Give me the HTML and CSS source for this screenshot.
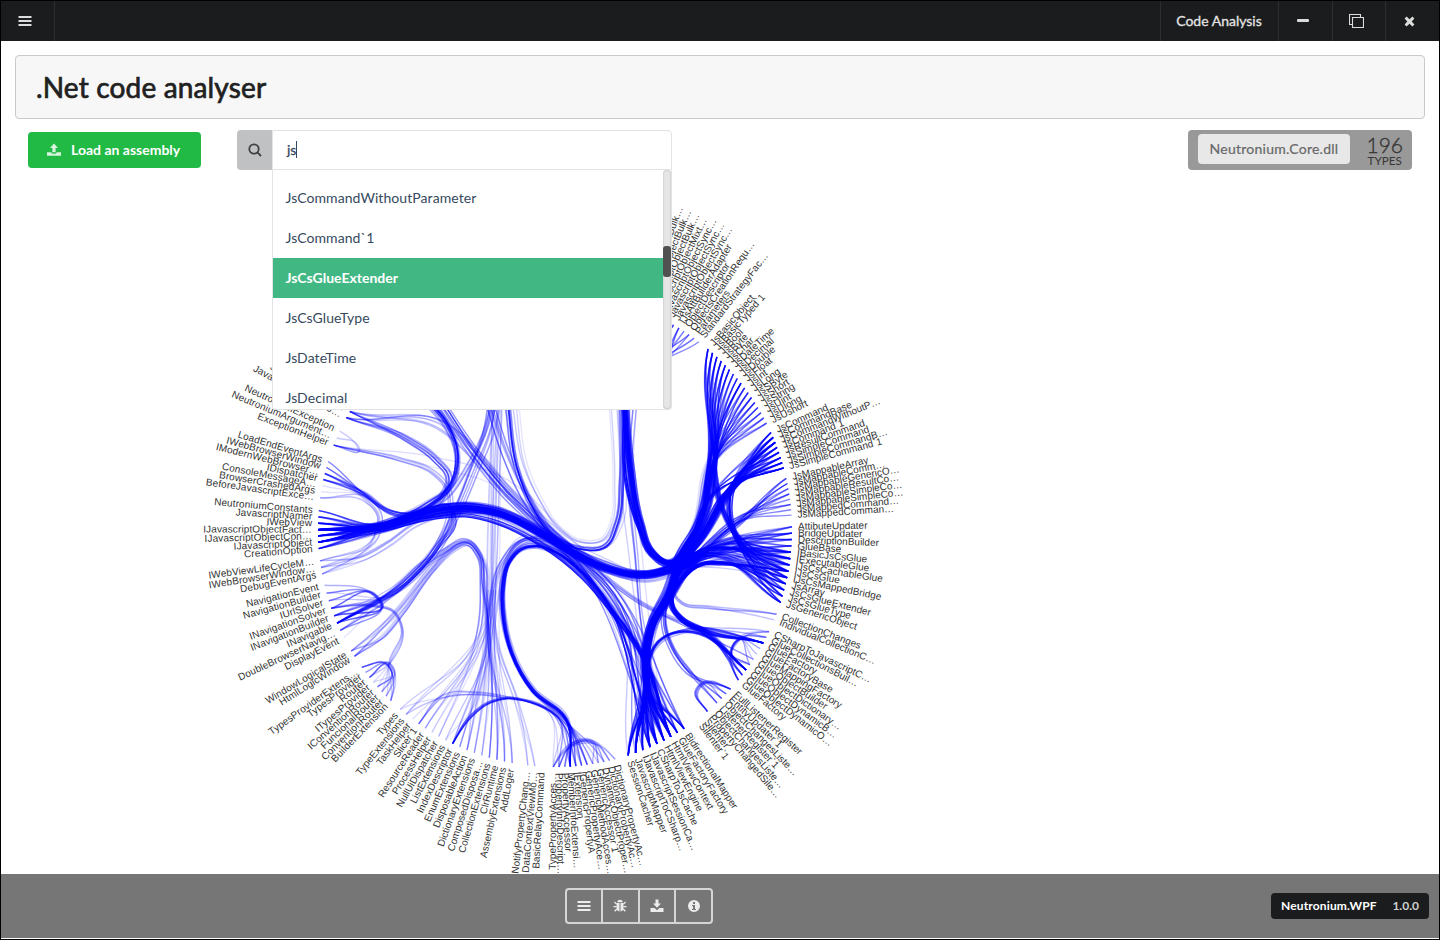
FILE: index.html
```html
<!DOCTYPE html>
<html lang="en">
<head>
<meta charset="utf-8">
<title>Code Analysis</title>
<link rel="stylesheet" href="styles.css">
</head>
<body>
<div class="window">
  <header class="topbar">
    <div class="cell menu"><svg width="14" height="12" viewBox="0 0 14 12"><path d="M.5 1h13v2H.5zM.5 5h13v2H.5zM.5 9h13v2H.5z"/></svg></div>
    <div class="spacer"></div>
    <div class="cell name">Code Analysis</div>
    <div class="cell min"><svg width="12" height="3" viewBox="0 0 12 3"><rect width="12" height="3" rx="1"/></svg></div>
    <div class="cell max"><svg width="15" height="14" viewBox="0 0 15 14"><path class="line" d="M3.500 10.500h-3v-10h11v3M3.500 3.500h11v10h-11z"/></svg></div>
    <div class="cell close"><svg width="11" height="11" viewBox="0 0 11 11"><path d="M2.600.6 5.500 3.300 8.400.6 10.400 2.600 7.700 5.500l2.700 2.900-2 2-2.900-2.700-2.900 2.700-2-2 2.700-2.900L.6 2.600z"/></svg></div>
  </header>
  <main class="content">
    <h1 class="title">.Net code analyser</h1>
    <div class="toolbar">
      <button class="load"><svg width="14" height="14" viewBox="0 0 14 14"><path d="M7 .5 11 5H8.600v4.200H5.400V5H3zM0 9.200h4.300c.3 1 1.200 1.500 2.700 1.500s2.400-.5 2.700-1.500H14v3.500H0z"/></svg><span>Load an assembly</span></button>
      <div class="search">
        <div class="glass"><svg width="14" height="14" viewBox="0 0 14 14"><circle cx="6" cy="6" r="4.700"/><path d="M9.400 9.400 13 13"/></svg></div>
        <div class="field"><span>js</span><i class="caret"></i></div>
        <ul class="options">
          <li>JsCommandWithoutParameter</li>
          <li>JsCommand`1</li>
          <li class="active">JsCsGlueExtender</li>
          <li>JsCsGlueType</li>
          <li>JsDateTime</li>
          <li>JsDecimal</li>
        </ul>
        <div class="track"><div class="thumb"></div></div>
      </div>
      <div class="stats">
        <div class="dll">Neutronium.Core.dll</div>
        <div class="count"><b>196</b><span>TYPES</span></div>
      </div>
    </div>
    <svg class="chart" viewBox="1 171 1438 703"><g id="links"></g><g id="labels"></g></svg>
  </main>
  <footer class="footer">
    <div class="actions">
      <a><svg width="14" height="14" viewBox="0 0 14 14"><path d="M.5 2h13v2H.5zM.5 6h13v2H.5zM.5 10h13v2H.5z"/></svg></a>
      <a><svg width="14" height="14" viewBox="0 0 14 14"><path d="M4.300 3.200a2.700 2.500 0 0 1 5.400 0zM3.500 4h3v8.500C4.500 12.200 3.500 11 3.500 8.500zM7.500 4h3v4.500c0 2.500-1 3.700-3 4z"/><path class="line" d="M3.500 5 1.500 3M.5 7.700h3M3.800 10 1.700 12.300M10.500 5l2-2M10.500 7.700h3M10.200 10l2.100 2.300"/></svg></a>
      <a><svg width="14" height="14" viewBox="0 0 14 14"><path d="M5.500.5h3v4H11L7 8.700 3 4.500h2.500zM.5 9h4L7 11.300 9.500 9h4v4H.5z"/></svg></a>
      <a><svg width="14" height="14" viewBox="0 0 14 14"><path fill-rule="evenodd" d="M7 1a6 6 0 1 0 0 12A6 6 0 0 0 7 1zM6 3h2v2H6zM5 6h3v4h1v1H5v-1h1V7H5z"/></svg></a>
    </div>
    <div class="version"><b>Neutronium.WPF</b><span>1.0.0</span></div>
  </footer>
</div>
<script src="chart.js"></script>
</body>
</html>
```
FILE: styles.css
```css
* { box-sizing: border-box; }
body { margin: 0; font-family: Lato, sans-serif; font-size: 14px; color: rgba(0,0,0,.87); background: #fff; }
.window { width: 1440px; height: 940px; border: 1px solid #000; display: flex; flex-direction: column; overflow: hidden; }
.topbar { height: 40px; flex: none; display: flex; background: #1b1c1d; color: #e4e4e4; }
.cell { display: flex; align-items: center; justify-content: center; border-left: 1px solid #2d2e2f; padding-bottom: 1px; }
.cell svg { fill: #dcdcdc; }
.cell .line { fill: none; stroke: #dcdcdc; stroke-width: 1.1; }
.menu { width: 54px; border-left: 0; border-right: 1px solid #2d2e2f; padding-right: 5px; }
.spacer { flex: 1; }
.name { width: 118px; padding: 0 1px 1px 0; -webkit-text-stroke: .3px currentColor; }
.min { width: 54px; padding-right: 5px; padding-bottom: 2px; }
.max { width: 53px; padding: 0 5px 0 0; }
.close { width: 54px; padding-right: 6px; padding-bottom: 0; }
.content { flex: 1; min-height: 0; display: flex; flex-direction: column; overflow: hidden; }
.title { margin: 14px 14px 11px; height: 64px; flex: none; padding: 0 20px 1px; display: flex; align-items: center; font-size: 28px; font-weight: 400; letter-spacing: .16px; -webkit-text-stroke: .7px currentColor; background: #f7f7f7; border: 1px solid #c9c9ca; border-radius: 4px; color: #212121; white-space: nowrap; }
.toolbar { height: 40px; flex: none; display: flex; align-items: center; padding: 0 27px; }
.load { width: 173px; height: 36px; padding: 0 0 1px 19px; border: 0; border-radius: 4px; background: #21ba45; color: #fff; font: 700 14px Lato, sans-serif; display: flex; align-items: center; gap: 10px; }
.load svg { fill: rgba(255,255,255,.82); }
.search { position: relative; width: 435px; height: 40px; margin-left: 36px; display: flex; }
.glass { width: 35px; background: #c0c1c2; border-radius: 4px 0 0 4px; display: flex; align-items: center; justify-content: center; padding-left: 1px; }
.glass svg { fill: none; stroke: #3f4042; stroke-width: 1.8; }
.field { flex: 1; display: flex; align-items: center; padding: 0 0 1px 14px; border: 1px solid #e2e3e3; border-radius: 0 4px 0 0; color: #35495e; -webkit-text-stroke: .3px currentColor; }
.caret { width: 1px; height: 17px; background: #35495e; }
.options { position: absolute; z-index: 2; left: 35px; top: 40px; width: 400px; height: 240px; margin: 0; padding: 8px 8px 0 0; list-style: none; overflow: hidden; background: #fff; border: solid #e2e3e3; border-width: 0 1px 1px; border-radius: 0 0 4px 4px; color: #35495e; letter-spacing: .07px; }
.options li { height: 40px; line-height: 40px; padding-left: 12.5px; }
.options .active { background: #41b883; color: #fff; font-weight: 700; letter-spacing: 0; }
.track { position: absolute; z-index: 3; left: 426px; top: 40px; width: 8px; height: 239px; border-radius: 4px; background: #e6e6e6; box-shadow: inset 0 0 2px #aaa; }
.thumb { width: 8px; height: 31px; margin-top: 76px; border-radius: 3px; background: #515151; }
.stats { width: 224px; height: 40px; margin-left: auto; border-radius: 4px; background: #999; display: flex; align-items: center; padding: 0 9px 2px 10px; justify-content: space-between; }
.dll { width: 152px; height: 30px; padding-bottom: 1px; border-radius: 4px; background: #e8e8e8; color: #676767; display: flex; align-items: center; justify-content: center; letter-spacing: .25px; -webkit-text-stroke: .2px currentColor; }
.count { color: #373737; text-align: center; display: flex; flex-direction: column; margin-top: 2px; }
.count b { font-size: 21px; font-weight: 300; line-height: 19px; -webkit-text-stroke: .4px currentColor; }
.count span { font-size: 11.7px; line-height: 12px; }
.chart { display: block; flex: none; width: 1438px; height: 703px; margin-top: 1px; }
#links { fill: none; stroke: #00f; }
#labels { font-family: Arial, "Liberation Sans", sans-serif; font-size: 10px; fill: #333; }
#labels .side { letter-spacing: .12px; }
.footer { height: 65px; flex: none; background: #767676; border-bottom: 1px solid #fff; display: flex; align-items: center; justify-content: flex-end; padding-right: 10px; }
.actions { display: flex; width: 148px; height: 36px; margin-right: 558px; border: 2px solid #d5d5d5; border-radius: 4px; }
.actions a { width: 37px; display: flex; align-items: center; justify-content: center; border-left: 2px solid #d5d5d5; }
.actions a:first-child { border-left: 0; width: 34px; }
.actions svg { fill: #ececec; }
.actions .line { fill: none; stroke: #ececec; stroke-width: 1.3; }
.version { width: 158px; height: 26px; padding: 0 10px 1px; border-radius: 4px; background: #1b1c1d; color: #fff; font-size: 12px; display: flex; align-items: center; justify-content: space-between; }
.version b { letter-spacing: .15px; }
.version span { font-weight: 700; color: #cfcfcf; }
```
FILE: chart.js
```js
const CX = 555, CY = 530, R = 237;

// Leaves run clockwise; each group spans [first angle, last angle] in degrees.
const groups = {
  A: [-68.8, -52.6, 'JavascriptObjectBulk…|JavascriptObjectBulk…|JavascriptObjectBulk…|JavascriptObjectMixt…|JavascriptObjectSync…|JavascriptObjectSync…|JavascriptObjectSync…|IJsAttBuilderAdapter|ObjectDescriptor|ObjectsCreationRequ…|Parameters|StandardStrategyFac…'],
  B: [-49.8, -26.8, 'JsBasicObject|JsBasicTyped`1|JsBool|JsByte|JsChar|JsDateTime|JsDecimal|JsDouble|JsFloat|JsInt|JsLong|JsSByte|JsShort|JsString|JsUint|JsUlong|JsUshort'],
  C: [-24.3, -15.2, 'JsCommand|JsCommandBase|JsCommandWithoutP…|JsCommand`1|JsResultCommand|JsSimpleCommand|JsSimpleCommandB…|JsSimpleCommand`1'],
  D: [-12.6, -3.6, 'JsMappableArray|JsMappableComm…|JsMappableGenericO…|JsMappableResultCo…|JsMappableSimpleCo…|JsMappableSimpleCo…|JsMappedCommand…|JsMappedComman…'],
  E: [-0.8, 17.8, 'AttibuteUpdater|BridgeUpdater|DescriptionBuilder|GlueBase|IBasicJsCsGlue|IExecutableGlue|IJsCsCachableGlue|IJsCsGlue|IJsCsMappedBridge|JsArray|JsCsGlueExtender|JsCsGlueType|JsGenericObject'],
  F: [20.8, 22.3, 'CollectionChanges|IndividualCollectionC…'],
  G: [25.4, 39.3, 'CSharpToJavascriptC…|GlueCollectionsBuil…|GlueFactory|GlueFactoryBase|GlueMappingFactory|GlueObjectBuilder|GlueObjectDictionary…|GlueObjectDynamicB…|GlueObjectDynamicO…|GlueFactory'],
  H: [42.2, 53.1, 'FullListenerRegister|EntityUpdater`1|ObjectChangesListe…|ListenerRegister`1|ObjectChangesListe…|PropertyChangedSile…|Silenter|Silenter`1'],
  I: [57, 72, 'BidirectionalMapper|GlueFactoryFactory|HtmlViewContext|HtmlViewEngine|CSharpToJsCache|IJavascriptSessionCa…|IJavascriptToCSharp…|JavascriptMapper|SessionCacher'],
  J: [75.3, 90.4, 'DictionaryPropertyAc…|DictionaryPropertyAc…|DynamicObjectProper…|GenericAccessor`1|GenericMethodAcces…|GenericPropertyAce…|IGenericPropertyA|IExtension|MemberInfoExtensi…|PropertyAccessor|PropertyInfoDescript…|TypePropertyAcces…'],
  K: [93.2, 96.6, 'BasicRelayCommand|DataContextViewMo…|NotifyPropertyChang…'],
  L: [100.4, 130.8, 'AddLoger|AssemblyExtensions|ClrRuntime|CollectionExtensions|ComposedDisposa…|DictionaryExtensions|DisposableAction|EnumExtensions|IndexDescriptor|ListExtensions|NullUiDispatcher|ProcessHelper|ResourceReader|Slicer`1|TaskHelper|TypeExtensions|Types'],
  M: [133.9, 144.6, 'BuilderExtension|ConventionRouter|FuncionalRouter|IConventionRouter|ITypesProvider|Router|TypesProvider|TypesProviderExtens…'],
  N: [147.8, 149.3, 'HtmlLogicWindow|WindowLogicalState'],
  O: [153, 166.5, 'DisplayEvent|DoubleBrowserNavig…|INavigable|INavigationBuilder|INavigationSolver|IUrlSolver|NavigationBuilder|NavigationEvent'],
  P: [169.3, 172.5, 'DebugEventArgs|IWebBrowserWindow…|IWebViewLifeCycleM…'],
  Q: [175.5, 184.7, 'CreationOption|IJavascriptObject|IJavascriptObjectCon…|IJavascriptObjectFact…|IWebView|JavascriptNamer|NeutroniumConstants'],
  R: [187.8, 196.8, 'BeforeJavascriptExce…|BrowserCrashedArgs|ConsoleMessageA…|IDispatcher|IModernWebBrowser…|IWebBrowserWindow|LoadEndEventArgs'],
  S: [201, 204.7, 'ExceptionHelper|NeutroniumArgument…|NeutroniumException'],
  T: [208.3, 210, 'JavascriptFramewo…|JavascriptExcep…']
};

const NS = 'http://www.w3.org/2000/svg';
const angle = (g, i) => {
  const n = g[2].split('|').length;
  return g[0] + (g[1] - g[0]) * i / (n - 1);
};
const polar = (deg, r) => [CX + r * Math.cos(deg * Math.PI / 180), CY + r * Math.sin(deg * Math.PI / 180)];

const labels = document.getElementById('labels');
for (const g of Object.values(groups)) {
  g[2].split('|').forEach((name, i) => {
    const a = angle(g, i), flip = a > 90 && a < 270;
    const t = document.createElementNS(NS, 'text');
    t.setAttribute('transform', `translate(${CX},${CY}) rotate(${a}) translate(${R + 6},0)${flip ? ' rotate(180)' : ''}`);
    t.setAttribute('dy', '.31em');
    if (flip) t.setAttribute('text-anchor', 'end');
    if (a > 132) t.setAttribute('class', 'side');
    t.textContent = name;
    labels.appendChild(t);
  });
}

const linkLayer = document.getElementById('links');
function smooth(p) {
  const n = p.length;
  const unit = (a, b) => { const x = b[0] - a[0], y = b[1] - a[1], l = Math.hypot(x, y) || 1; return [x / l, y / l]; };
  const tan = p.map((q, i) => {
    if (!i || i === n - 1) {
      const u = i ? unit(p[i - 1], q) : unit(q, p[1]);
      if (Math.hypot(q[0] - CX, q[1] - CY) < R - 3) return u;
      // ends lean towards the centre of the circle
      const c = unit(q, [CX, CY]), s = i ? -1 : 1;
      return unit([0, 0], [u[0] * .65 + s * c[0] * .35, u[1] * .65 + s * c[1] * .35]);
    }
    // short neighbours weigh more, so long fan segments keep the trunk direction
    const a = p[i - 1], b = p[i + 1];
    const la = Math.hypot(q[0] - a[0], q[1] - a[1]), lb = Math.hypot(b[0] - q[0], b[1] - q[1]);
    const ua = unit(a, q), ub = unit(q, b);
    return unit([0, 0], [ua[0] * lb + ub[0] * la, ua[1] * lb + ub[1] * la]);
  });
  let d = `M${p[0][0].toFixed(1)},${p[0][1].toFixed(1)}`;
  for (let i = 1; i < n; i++) {
    const a = p[i - 1], b = p[i], l = Math.hypot(b[0] - a[0], b[1] - a[1]) * .37;
    d += `C${[a[0] + tan[i - 1][0] * l, a[1] + tan[i - 1][1] * l, b[0] - tan[i][0] * l, b[1] - tan[i][1] * l, ...b].map(v => v.toFixed(1)).join(',')}`;
  }
  return d;
}
// spec "G:2-7" is a range of leaves, "" leaves that end open
function leaves(spec) {
  if (!spec) return [null];
  const [k, r] = spec.split(':'), g = groups[k];
  const [a, b] = r ? r.split('-').map(Number) : [0, g[2].split('|').length - 1];
  const out = [];
  for (let i = a; i <= b; i++) out.push(polar(angle(g, i), R));
  return out;
}
let seed = 7;
const rand = () => (seed = seed * 16807 % 2147483647) / 2147483647;
function bundle(from, trunk, to, count, opacity, spread = 3, width = 1.4) {
  const A = leaves(from), B = leaves(to);
  const pts = trunk.split(' ').map(s => s.split(',').map(Number));
  for (let k = 0; k < count; k++) {
    const base = count > 1 ? (k / (count - 1) - .5) * spread : 0;
    const phase = rand() * 6.3, sway = spread * .22;
    const mid = pts.map((q, i) => {
      const a = pts[Math.max(0, i - 1)], b = pts[Math.min(pts.length - 1, i + 1)];
      const x = b[0] - a[0], y = b[1] - a[1], l = Math.hypot(x, y) || 1;
      const o = base + Math.sin(phase + i * .6) * sway;
      return [q[0] - y / l * o, q[1] + x / l * o];
    });
    const a = A[k % A.length], b = B[(k * 5 + 2) % B.length];
    const path = document.createElementNS(NS, 'path');
    path.setAttribute('d', smooth([...(a ? [a] : []), ...mid, ...(b ? [b] : [])]));
    path.setAttribute('stroke-opacity', Math.min(1, opacity * (.5 + rand())).toFixed(2));
    path.setAttribute('stroke-width', width);
    linkLayer.appendChild(path);
  }
}

// upper right fans
bundle('A:7-11', '660,361 630,385', '', 8, .45, 8);
bundle('A:0-6', '655,350 630,375', '', 14, .5, 5);
bundle('B', '713,468 703,518 687,545 667,563 653,554 640,523 630,467 624,400', '', 17, .55, 6);
bundle('B', '711,470 700,523 681,556 668,592 653,622 646,655 647,683', 'I', 22, .38, 8);
bundle('B', '714,465 722,507 733,530', 'E:4-12', 17, .38, 4);
bundle('B', '707,470 695,525 667,568 635,575 605,568 573,552 540,532 497,512 465,507 430,512 380,527', 'Q:1-5', 12, .2, 7);
bundle('C', '731,490 700,540 681,562 668,597 653,622 646,655 647,683', 'I', 16, .45, 5);
bundle('C', '733,487 731,520 738,540', 'E:4-12', 14, .5, 4);
bundle('C', '728,492 700,535 677,562 667,562 653,552 640,520 630,465 625,400', '', 8, .6, 3);
bundle('D', '737,522 713,541 688,568 668,600 653,625 646,655 647,683', 'I', 14, .4, 6);
bundle('E:0-7', '715,546 690,564 668,598 653,623 646,655 647,683', 'I', 12, .4, 6);
bundle('E:7-12', '722,563 702,564 682,579 666,603 653,626 647,655 647,685', 'I', 12, .65, 3);

// the wide stream from the left edge to the glue types
bundle('Q', '384,526 430,511 465,507 497,512 540,532 573,552 605,568 637,575 673,570 703,557', 'E', 24, .42, 7);
bundle('Q:1-5', '384,526 428,513 465,507 497,512 540,533 573,553 605,568 640,575 680,563 703,536 730,490', 'C', 8, .7, 4, 1.6);
bundle('Q:1-3', '384,530 430,519 465,516 497,523 540,544 583,577 613,612 640,650', 'I:0-4', 4, .6, 3);
bundle('Q:0-6', '382,529 430,510 450,494 466,470 487,425 493,400', '', 6, .2, 5);

// lower right
bundle('B:0-8', '709,470 699,526 681,556 671,588 672,607 682,619 703,630', 'G', 12, .5, 4);
bundle('E:4-9', '722,548 698,552 680,570 672,592 674,609 684,621 703,631', 'G', 10, .5, 3);
bundle('Q:2-3', '384,528 430,514 465,509 497,513 540,534 573,553 607,578 640,602 680,622', 'G:0-5', 4, .4, 4);
bundle('I:3-8', '645,685 650,657 658,642 673,633 693,632 717,643 728,657', 'G:6-9', 6, .4, 2);
bundle('G:0-6', '738,640 731,651', 'G:6-9', 9, .3, 2);
bundle('E:1-5', '715,545 686,562 670,592 664,615 672,648 689,672', 'H:0-3', 7, .4, 4);
bundle('H:0-2', '703,684 697,691', 'H:3-7', 8, .25, 3);
bundle('C:0-3', '727,492 699,537 678,571 674,594 682,603 707,607', 'F', 3, .35, 2);
bundle('I:5-8', '646,680 655,648 665,638 680,632', 'G:0-4', 5, .3, 3);

// centre, from the hidden upper leaves
bundle('', '508,405 517,467 533,507 557,538 583,548 603,547 617,523 622,483 622,405', '', 6, .5, 4);
bundle('', '510,405 520,467 537,503 560,533 583,544 603,541 614,523 618,483 616,405', '', 6, .15, 12);
bundle('', '624,405 627,490 640,532 654,557 667,563 686,545 709,498', 'C', 5, .7, 3);
bundle('', '632,405 628,470 636,560 642,620', 'I:0-6', 6, .25, 10);
bundle('T', '445,427 477,457 507,493 540,523 573,550 605,565 640,577 680,567 712,553', 'E:3-12', 8, .2, 10);
bundle('', '440,402 477,457 507,493 540,525 573,553 607,585', 'I:0-6', 7, .4, 8);
bundle('', '490,405 507,455 533,507 560,540 600,563 650,575 690,562', 'E:1-8', 8, .25, 9);
bundle('', '427,400 447,425 458,455 452,485 428,504 384,524', 'Q:1-5', 9, .35, 6);
bundle('', '494,400 487,434 474,468 454,517 438,548 407,583', 'O:1-3', 8, .24, 10);
bundle('Q:1-4', '385,525 425,513 450,508 454,519 438,546 411,578', 'O:2-2', 4, .6, 3);

// left side
bundle('R:3-6', '364,494 390,511 410,514 432,504 449,488 457,465 448,425 430,402', '', 7, .38, 3);
bundle('R:3-5', '364,494 390,513 420,517 465,511 497,513 540,532', 'I:2-4', 4, .35, 4);
bundle('R:0-4', '368,500 380,515 378,532', 'P', 6, .22, 5);
bundle('P', '365,557 390,543 415,525 445,514 470,509', '', 5, .22, 6);
bundle('T', '407,439 435,459 449,480 444,494 400,519', 'Q:1-5', 7, .3, 5);
bundle('S:0-0', '400,460 433,473 449,493 450,510 438,545', 'O:2-2', 4, .25, 4);
bundle('S:0-0', '430,462 505,485 560,535 620,600', 'I:2-4', 2, .13, 8);
bundle('S:1-2', '357,445 359,449', 'S:0-0', 2, .2, 1);
bundle('O', '395,590 420,566 445,551 467,541 478,551 483,583 488,620', 'L:2-12', 7, .2, 6);
bundle('O:4-7', '375,595 381,602', 'O:1-3', 7, .34, 3);
bundle('N', '383,636 402,613 435,567 455,548 468,543 480,556 487,610', 'L:3-6', 5, .22, 4);
bundle('M', '390,662 402,628 393,611 375,606', 'O:2-6', 6, .2, 2);
bundle('M:0-4', '393,672 389,665', 'M:5-7', 9, .3, 3);
bundle('N', '400,608 430,570 455,545 469,543 478,554 482,590 478,635', 'L:9-16', 6, .18, 5);
bundle('', '497,405 495,470 493,560 492,605', 'L', 13, .15, 10, 1.2);
bundle('I:0-2', '640,650 600,593 560,553 527,541 503,565 494,600', 'L:0-2', 6, .22, 7);
bundle('I:2-4', '640,650 600,593 555,549 522,540 507,556 493,595 496,640 517,705', 'K:1-2', 4, .25, 5);

// lower centre
bundle('J:2-10', '567,720 533,690 512,653 504,620 503,587 509,562 521,549 537,546 557,553 583,573 613,613 640,650', 'I:0-4', 8, .33, 4);
bundle('J:8-8', '566,719 533,691 512,653 504,620 503,587 509,562 521,549 537,546 557,553 583,573', 'I:4-5', 5, .65, 2);
bundle('J:4-9', '566,719 533,690 511,653 502,620 501,587 507,560 520,543 545,539 577,558 605,568 640,576 680,568', 'E:3-9', 5, .28, 3);
bundle('Q:0-4', '384,528 430,513 465,508 497,513 530,530 577,565 612,608', 'I', 8, .3, 9);
bundle('L:8-8', '470,717 490,702 507,698 530,702 557,716', 'J:4-11', 6, .38, 2);
bundle('L:13-16', '443,697 477,694 507,698 545,708', 'J:6-11', 5, .23, 3);
bundle('L:6-9', '475,700 487,650 492,590', '', 5, .2, 6);
bundle('J:0-4', '590,741 575,743', 'J:9-11', 9, .25, 3);
```
